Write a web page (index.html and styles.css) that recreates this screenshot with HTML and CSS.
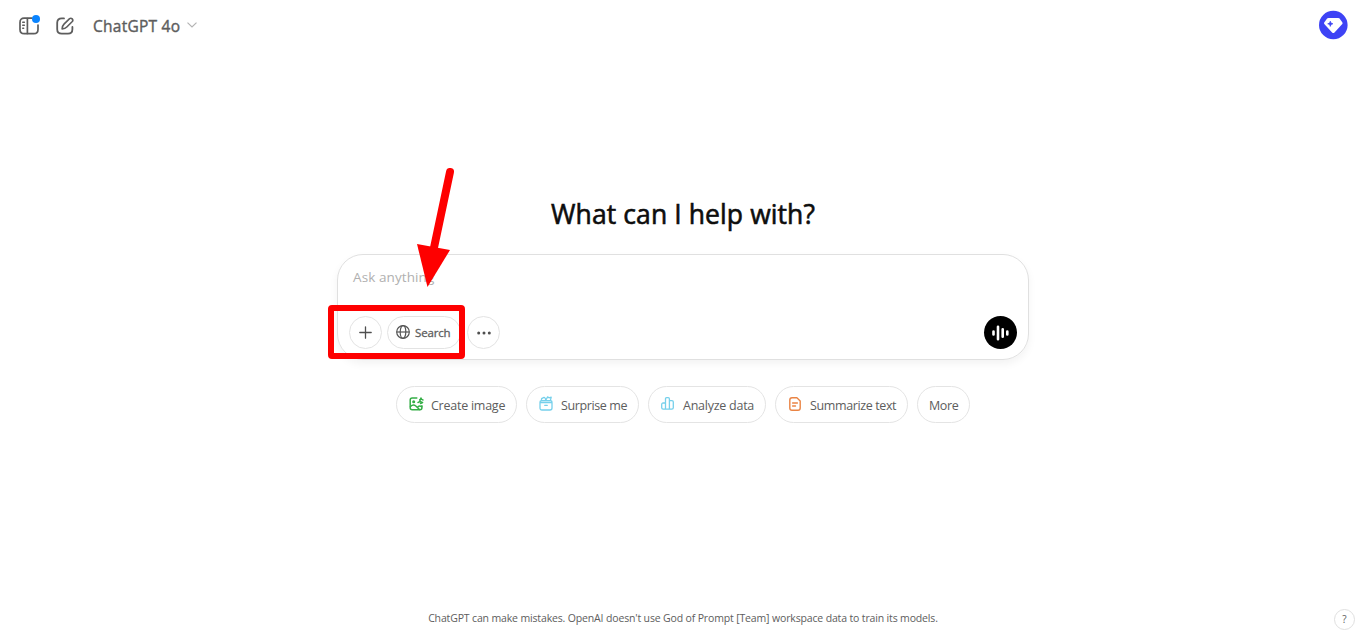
FILE: index.html
```
<!DOCTYPE html>
<html lang="en">
<head>
<meta charset="utf-8">
<title>ChatGPT</title>
<link rel="stylesheet" href="styles.css">
</head>
<body>
<div class="app">
  <header class="topbar">
    <button class="icon-btn sidebar-btn" aria-label="Open sidebar">
      <svg width="20" height="18" viewBox="0 0 20 18" fill="none" stroke="#5d5d5d" stroke-width="1.7" stroke-linecap="round"><path d="M13 1.2H5.2Q1 1.2 1 5.4v7Q1 16.600 5.200 16.600H14.800Q19 16.600 19 12.400V8"/><path d="M8.400 1.500V16.400"/><path d="M3.700 5.300H5.400M3.700 8.300H5.400M3.700 11.300H4.700" stroke-width="1.4"/></svg>
      <span class="dot"></span>
    </button>
    <button class="icon-btn" aria-label="New chat">
      <svg width="18" height="18" viewBox="0 0 18 18" fill="none" stroke="#5d5d5d" stroke-width="1.8" stroke-linecap="round" stroke-linejoin="round"><path d="M8 1.400H5.800Q1.200 1.400 1.200 5.800V12.200Q1.200 16.700 5.800 16.700H12Q16.400 16.700 16.400 12.200V10"/><path d="M6.100 11.900Q6.100 9 8 7.100L13.600 1.700Q14.900.700 16.200 1.900Q17.400 3.200 16.300 4.500L10.800 10Q9.100 11.700 6.100 11.900Z" stroke-width="1.6"/></svg>
    </button>
    <button class="model"><span class="model-name">ChatGPT 4o</span>
      <svg width="10" height="6" viewBox="0 0 10 6" fill="none" stroke="#b4b4b4" stroke-width="1.2"><path d="M.5.600 5 5 9.500.600"/></svg>
    </button>
    <svg class="avatar" width="30" height="30" viewBox="0 0 30 30"><circle cx="15.300" cy="15" r="14.300" fill="#3e43f5"/><path d="M10.500 8h9.800q.8 0 1.300.6l2.800 4q.5.8-.1 1.500l-7.800 8.300q-1.200 1.100-2.400 0L6.300 14.100q-.6-.7-.1-1.500l2.900-4q.5-.6 1.400-.6z" fill="#fff"/><path d="M12.300 11.200l.7 1.900 1.900.7-1.900.7-.7 1.900-.7-1.900-1.900-.7 1.900-.7z" fill="#3e43f5" stroke="#3e43f5" stroke-width=".7"/></svg>
  </header>

  <main class="main">
    <h1 class="heading"><span>What can I help with?</span></h1>
    <section class="composer">
      <div class="placeholder">Ask anything</div>
      <div class="tools">
        <button class="round"><svg width="13" height="13" viewBox="0 0 13 13" stroke="#4f4f4f" stroke-width="1.300" stroke-linecap="round"><path d="M6.500.8V12.200M.8 6.500H12.200"/></svg></button>
        <button class="search">
          <svg width="14" height="14" viewBox="0 0 14 14" fill="none" stroke="#555" stroke-width="1.200"><circle cx="7" cy="7" r="6.300"/><ellipse cx="7" cy="7" rx="2.800" ry="6.300"/><path d="M.7 7H13.300"/></svg>
          <span>Search</span>
        </button>
        <button class="round more-tools"><svg width="14" height="4" viewBox="0 0 14 4" fill="#4f4f4f"><circle cx="1.700" cy="2" r="1.500"/><circle cx="7" cy="2" r="1.500"/><circle cx="12.300" cy="2" r="1.500"/></svg></button>
        <button class="voice" aria-label="Voice mode"><svg width="17" height="16" viewBox="0 0 17 16" stroke="#fff" stroke-width="2.600" stroke-linecap="round"><path d="M1.500 6.500V9.500M6 1.700V14.300M10.700 4.300V11.700M15.300 6.500V9.500"/></svg></button>
      </div>
    </section>
    <nav class="chips">
      <button class="chip create">
        <svg width="15" height="14" viewBox="0 0 15 14" fill="none" stroke="#35ae47" stroke-width="1.500" stroke-linecap="round" stroke-linejoin="round"><path d="M7.800 1H3.200Q1.200 1 1.200 3V10.800Q1.200 12.800 3.200 12.800H11Q12.900 12.800 12.900 10.800V8.800"/><path d="M1.500 9.600Q4.200 6.700 6.800 9L10.500 12.500M9 9.700Q10.500 8.200 12.700 9.600"/><circle cx="4.700" cy="4.700" r=".8"/><path d="M10.700 2.800Q11.700 2.700 12 1Q12.200 2.700 14 2.900M9 5.400Q10.800 5.200 11 3.700Q11.300 5.300 13.600 5.500L11.500 6.500"/></svg>
        <span>Create image</span></button>
      <button class="chip surprise">
        <svg width="14" height="15" viewBox="0 0 14 15" fill="none" stroke="#76d0eb" stroke-width="1.300" stroke-linecap="round" stroke-linejoin="round"><path d="M1 6.500H13V12Q13 14 11 14H3Q1 14 1 12ZM1 8.200V6Q1 4.700 2.500 4.700H11.500Q13 4.700 13 6M5.700 9.300H8.300"/><path d="M2.800 4.500Q1.700 2.300 3.900 2Q5.200.600 6.300 2.500L6.800 4.400M7.200 3.500L8.600.9 10 1.800 12.200 1.200 11.400 4.400"/></svg>
        <span>Surprise me</span></button>
      <button class="chip analyze">
        <svg width="13" height="13" viewBox="0 0 13 13" fill="none" stroke="#76d0eb" stroke-width="1.300" stroke-linejoin="round"><path d="M4.500 12V2Q4.500.700 5.700.700H7.200Q8.400.700 8.400 2V12M4.500 6H2.200Q.7 6 .7 7.500V10.700Q.7 12.100 2.200 12.100H10.800Q12.300 12.100 12.300 10.700V5Q12.300 3.700 10.900 3.700H8.400"/></svg>
        <span>Analyze data</span></button>
      <button class="chip summarize">
        <svg width="12" height="14" viewBox="0 0 12 14" fill="none" stroke="#ea8444" stroke-width="1.400" stroke-linecap="round" stroke-linejoin="round"><path d="M3 .8H7.900L11.200 3.900V11Q11.200 13.200 9 13.200H3Q.8 13.200.8 11V3Q.8.800 3 .8Z"/><path d="M3.600 6H8.400M3.600 9H6.500"/></svg>
        <span>Summarize text</span></button>
      <button class="chip more"><span>More</span></button>
    </nav>
  </main>

  <footer class="footer"><span>ChatGPT can make mistakes. OpenAI doesn't use God of Prompt [Team] workspace data to train its models.</span></footer>
  <button class="help">?</button>
  <div class="highlight"></div>
  <svg class="arrow" width="50" height="130" viewBox="0 0 50 130"><path d="M40 12 23.500 90" stroke="#fe0000" stroke-width="8" stroke-linecap="round"/><path d="M7 84 40 90 17.500 127Z" fill="#fe0000"/></svg>
</div>
</body>
</html>
```
FILE: styles.css
```
* { box-sizing: border-box; }
body { margin: 0; background: #fff; color: #5d5d5d; font-family: "Open Sans", "Noto Sans", sans-serif; }
button { margin: 0; padding: 0; border: 0; background: none; color: inherit; font: inherit; white-space: nowrap; }
svg { display: block; flex: none; }
.app { position: relative; display: flex; flex-direction: column; height: 641px; overflow: hidden; }
.topbar { display: flex; align-items: center; height: 51px; padding: 0 18px 1px 19px; }
.icon-btn { position: relative; margin-right: 17px; margin-top: 2px; }
.dot { position: absolute; left: 13px; top: -2px; width: 8px; height: 8px; border-radius: 50%; background: #0a84ff; }
.model { display: flex; align-items: center; gap: 7px; margin-left: 2px; }
.model-name { width: 87px; text-align: left; font-size: 15.5px; letter-spacing: .25px; padding-top: 2px; -webkit-text-stroke: .4px currentColor; }
.avatar { margin-left: auto; }
.main { flex: 1; display: flex; flex-direction: column; align-items: center; padding-top: 142px; }
.heading { margin: 0; height: 42px; width: 264px; color: #0d0d0d; font-size: 26.500px; font-weight: 400; line-height: 42px; letter-spacing: .1px; white-space: nowrap; -webkit-text-stroke: .6px currentColor; }
.composer { width: 692px; height: 106px; margin-top: 19px; padding: 12px 12px 10px 11px; display: flex; flex-direction: column; justify-content: space-between; border: 1px solid #e0e0e0; border-radius: 26px; box-shadow: 0 4px 9px rgba(0,0,0,.05); }
.placeholder { padding-left: 4px; font-size: 13.500px; line-height: 20px; letter-spacing: .1px; color: #b0b0b0; }
.tools { display: flex; align-items: center; height: 33px; }
.round { width: 33px; height: 33px; display: grid; place-items: center; border: 1px solid #e3e3e3; border-radius: 50%; }
.round:first-child { padding: 0 1px 1px 0; }
.search { width: 74px; height: 33px; margin: 0 6px 0 5px; padding-left: 8px; display: flex; align-items: center; gap: 5px; border: 1px solid #e3e3e3; border-radius: 17px; font-size: 11.500px; letter-spacing: -.15px; -webkit-text-stroke: .3px currentColor; }
.search svg { margin-top: -1px; }
.voice { width: 33px; height: 33px; margin-left: auto; margin-right: -1px; display: grid; place-items: center; border-radius: 50%; background: #000; }
.chips { display: flex; gap: 9px; margin-top: 26px; }
.chip { height: 37px; display: flex; align-items: center; border: 1px solid #e4e4e4; border-radius: 19px; font-size: 12.500px; letter-spacing: -.38px; padding-left: 12px; }
.chip svg { margin-top: -2px; }
.chip span { padding-top: 1px; }
.create { width: 121px; gap: 7px; letter-spacing: -.25px; }
.surprise { width: 113px; gap: 8px; }
.analyze { width: 118px; gap: 9px; letter-spacing: -.25px; }
.summarize { width: 133px; padding-left: 13px; gap: 9px; }
.more { width: 53px; padding-left: 11px; }
.footer { height: 46px; text-align: center; font-size: 10.500px; letter-spacing: -.15px; line-height: 46px; white-space: nowrap; }
.help { position: absolute; left: 1334px; top: 609px; width: 21px; height: 21px; border: 1px solid #e0e0e0; border-radius: 50%; font-size: 10px; line-height: 19px; }
.highlight { position: absolute; left: 328px; top: 305px; width: 137px; height: 54px; border: 6px solid #fe0000; border-radius: 4px; }
.arrow { position: absolute; left: 410px; top: 160px; }
```
